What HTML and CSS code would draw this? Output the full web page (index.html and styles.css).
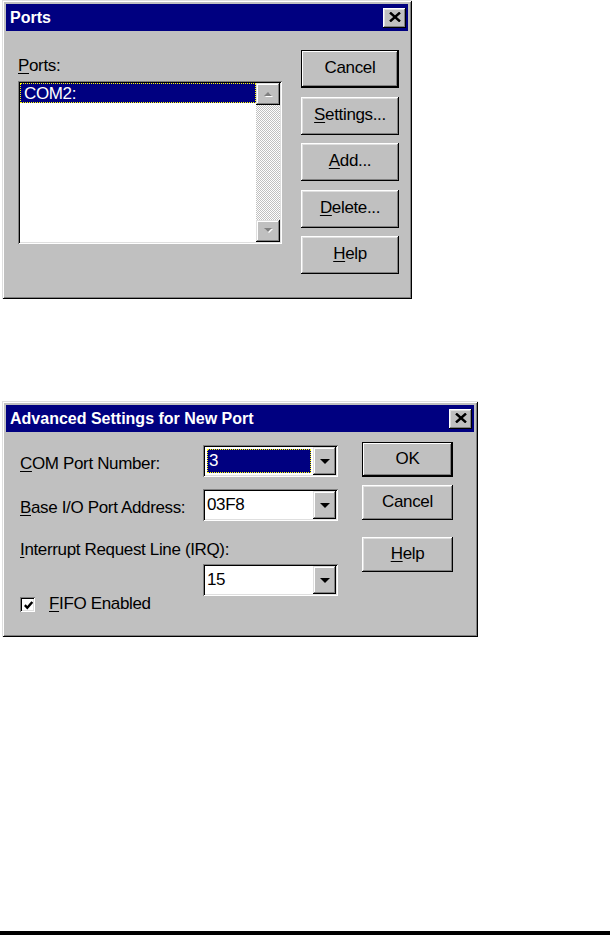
FILE: index.html
```html
<!DOCTYPE html>
<html lang="en">
<head>
  <meta charset="UTF-8">
  <title>Ports</title>
  <link rel="stylesheet" href="styles.css">
</head>
<body>

  <div class="window ports">
    <div class="titlebar">
      <span class="title">Ports</span>
      <span class="close">
        <svg width="12" height="10" viewBox="0 0 12 10"><path d="M1 0.5 L11 9.5 M11 0.5 L1 9.5" stroke="#000" stroke-width="2.4"/></svg>
      </span>
    </div>
    <div class="ports-body">
      <div class="list-col">
        <div class="label"><u>P</u>orts:</div>
        <div class="listbox sunken">
          <div class="list-items">
            <div class="item selected">COM2:</div>
          </div>
          <div class="scrollbar">
            <div class="scroll-btn">
              <svg width="10" height="6" viewBox="0 0 10 6"><path d="M2 6 L10 6 L6 2 Z" fill="#fff"/><path d="M1 5 L9 5 L5 1 Z" fill="#808080"/></svg>
            </div>
            <div class="scroll-track"></div>
            <div class="scroll-btn">
              <svg width="10" height="6" viewBox="0 0 10 6"><path d="M2 1 L10 1 L6 5 Z" fill="#fff"/><path d="M1 0 L9 0 L5 4 Z" fill="#808080"/></svg>
            </div>
          </div>
        </div>
      </div>
      <div class="btn-col">
        <button class="btn default">Cancel</button>
        <button class="btn"><u>S</u>ettings...</button>
        <button class="btn"><u>A</u>dd...</button>
        <button class="btn"><u>D</u>elete...</button>
        <button class="btn"><u>H</u>elp</button>
      </div>
    </div>
  </div>

  <div class="window advanced">
    <div class="titlebar">
      <span class="title">Advanced Settings for New Port</span>
      <span class="close">
        <svg width="12" height="10" viewBox="0 0 12 10"><path d="M1 0.5 L11 9.5 M11 0.5 L1 9.5" stroke="#000" stroke-width="2.4"/></svg>
      </span>
    </div>
    <div class="adv-body">
      <div class="fields">
        <div class="field-row">
          <span class="field-label"><u>C</u>OM Port Number:</span>
          <div class="combo sunken">
            <span class="combo-value focused">3</span>
            <span class="combo-btn"><svg width="10" height="5" viewBox="0 0 10 5"><path d="M0 0 L10 0 L5 5 Z" fill="#000"/></svg></span>
          </div>
        </div>
        <div class="field-row">
          <span class="field-label"><u>B</u>ase I/O Port Address:</span>
          <div class="combo sunken">
            <span class="combo-value">03F8</span>
            <span class="combo-btn"><svg width="10" height="5" viewBox="0 0 10 5"><path d="M0 0 L10 0 L5 5 Z" fill="#000"/></svg></span>
          </div>
        </div>
        <div class="irq-label"><u>I</u>nterrupt Request Line (IRQ):</div>
        <div class="field-row last">
          <label class="check-row">
            <span class="checkbox sunken">
              <svg width="9" height="9" viewBox="0 0 9 9"><path d="M0.8 4.2 L3.3 6.8 L8.3 1" fill="none" stroke="#000" stroke-width="2.4"/></svg>
            </span>
            <span><u>F</u>IFO Enabled</span>
          </label>
          <div class="combo sunken">
            <span class="combo-value">15</span>
            <span class="combo-btn"><svg width="10" height="5" viewBox="0 0 10 5"><path d="M0 0 L10 0 L5 5 Z" fill="#000"/></svg></span>
          </div>
        </div>
      </div>
      <div class="adv-btns">
        <button class="btn default">OK</button>
        <button class="btn">Cancel</button>
        <button class="btn help"><u>H</u>elp</button>
      </div>
    </div>
  </div>

  <div class="page-rule"></div>
</body>
</html>
```

FILE: styles.css
```css
* {
  box-sizing: border-box;
}
body {
  margin: 0;
  height: 935px;
  background: #fff;
  color: #000;
  font-family: "Liberation Sans", Arial, sans-serif;
  font-size: 17px;
  letter-spacing: -0.35px;
  display: flex;
  flex-direction: column;
}
u {
  text-decoration-thickness: 1px;
  text-underline-offset: 2px;
}

/* window frame */
.window {
  margin-left: 2px;
  padding: 4px;
  background: #c0c0c0;
  box-shadow: inset 1px 1px #dfdfdf, inset -1px -1px #000,
              inset 2px 2px #fff, inset -2px -2px #808080;
  display: flex;
  flex-direction: column;
}
.ports {
  width: 410px;
  height: 299px;
}
.advanced {
  width: 476px;
  height: 236px;
  margin-top: 102px;
}
.titlebar {
  height: 27px;
  background: #000080;
  color: #fff;
  font-size: 16px;
  font-weight: bold;
  letter-spacing: 0;
  line-height: 27px;
  padding: 0 2px 0 4px;
  display: flex;
  align-items: center;
  justify-content: space-between;
}
.close {
  width: 23px;
  height: 20px;
  background: #c0c0c0;
  box-shadow: inset -1px -1px #000, inset 1px 1px #fff,
              inset -2px -2px #808080, inset 2px 2px #dfdfdf;
  display: flex;
  align-items: center;
  justify-content: center;
  padding-bottom: 1px;
}

/* 3d bits */
.sunken {
  background: #fff;
  box-shadow: inset 1px 1px #808080, inset -1px -1px #fff,
              inset 2px 2px #000, inset -2px -2px #dfdfdf;
  padding: 2px;
}
.btn {
  font: inherit;
  letter-spacing: inherit;
  color: #000;
  border: none;
  background: #c0c0c0;
  box-shadow: inset -1px -1px #000, inset 1px 1px #fff,
              inset -2px -2px #808080, inset 2px 2px #dfdfdf;
  padding: 0 0 2px 0;
  cursor: pointer;
}
.btn.default {
  box-shadow: inset 0 0 0 1px #000, inset -2px -2px #000,
              inset 2px 2px #fff, inset -3px -3px #808080;
}

/* ports dialog */
.ports-body {
  display: flex;
  gap: 19px;
  padding: 19px 0 0 12px;
}
.list-col {
  width: 264px;
  margin-top: 7px;
}
.label {
  line-height: 18px;
  margin-bottom: 6px;
}
.listbox {
  height: 163px;
  display: flex;
}
.list-items {
  flex: 1;
}
.item {
  height: 20px;
  line-height: 17px;
  padding: 1px 0 0 3px;
}
.item.selected {
  background: #000080;
  color: #fff;
  border: 1px dotted #ffff00;
}
.scrollbar {
  width: 24px;
  display: flex;
  flex-direction: column;
  background: repeating-conic-gradient(#c0c0c0 0 25%, #fff 0 50%) 0 0 / 2px 2px;
}
.scroll-btn {
  height: 22px;
  background: #c0c0c0;
  box-shadow: inset -1px -1px #000, inset 1px 1px #dfdfdf,
              inset -2px -2px #808080, inset 2px 2px #fff;
  display: flex;
  align-items: center;
  justify-content: center;
}
.scroll-track {
  flex: 1;
}
.btn-col {
  display: flex;
  flex-direction: column;
  gap: 8.5px;
}
.btn-col .btn {
  width: 98px;
  height: 38px;
}

/* advanced settings dialog */
.adv-body {
  display: flex;
  gap: 24px;
  padding-left: 14px;
}
.fields {
  padding-top: 13px;
  display: flex;
  flex-direction: column;
}
.field-row {
  display: grid;
  grid-template-columns: 183px 135px;
  align-items: center;
  margin-bottom: 12px;
}
.field-label {
  line-height: 18px;
  margin-top: 6px;
}
.field-row.last {
  align-items: start;
  margin-bottom: 0;
}
.irq-label {
  line-height: 18px;
  margin-top: 7.5px;
  margin-bottom: 5.5px;
}
.combo {
  height: 32px;
  display: flex;
}
.combo-value {
  flex: 1;
  line-height: 28px;
  padding-left: 2px;
}
.combo-value.focused {
  margin: 2px;
  padding-left: 1px;
  line-height: 22px;
  background: #000080;
  color: #fff;
  border: 1px dotted #ffff00;
}
.combo-btn {
  width: 23px;
  background: #c0c0c0;
  box-shadow: inset -1px -1px #000, inset 1px 1px #dfdfdf,
              inset -2px -2px #808080, inset 2px 2px #fff;
  display: flex;
  align-items: center;
  justify-content: center;
}
.check-row {
  grid-column: 1;
  grid-row: 1;
  margin-top: 31px;
  display: flex;
  align-items: center;
  gap: 14px;
  line-height: 18px;
}
.field-row.last .combo {
  grid-column: 2;
  grid-row: 1;
}
.checkbox {
  width: 15px;
  height: 15px;
  padding: 2px 0 0 2px;
  display: flex;
  align-items: center;
  justify-content: center;
}
.adv-btns {
  padding-top: 10px;
  display: flex;
  flex-direction: column;
  gap: 8px;
}
.adv-btns .btn {
  width: 91px;
  height: 35px;
}
.adv-btns .help {
  margin-top: 9px;
}

.page-rule {
  margin-top: auto;
  height: 4px;
  background: #000;
}
```
